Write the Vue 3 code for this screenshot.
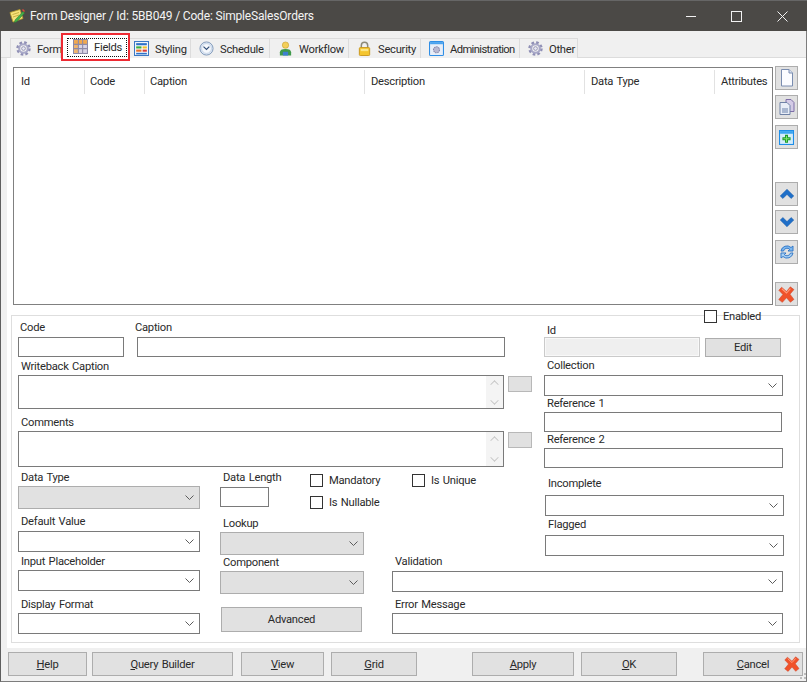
<script setup>
const tabs = [
  { name: 'Form', icon: 'gear', width: 51, pad: 5 },
  { name: 'Fields', icon: 'grid', width: 65, pad: 10, active: true },
  { name: 'Styling', icon: 'palette', width: 61, pad: 4 },
  { name: 'Schedule', icon: 'clock', width: 79, pad: 8 },
  { name: 'Workflow', icon: 'person', width: 79, pad: 8 },
  { name: 'Security', icon: 'lock', width: 72, pad: 8 },
  { name: 'Administration', icon: 'window', width: 99, pad: 8, tight: true },
  { name: 'Other', icon: 'gear', width: 58, pad: 8 }
]
const columns = [
  { name: 'Id', width: 71, pad: 7 },
  { name: 'Code', width: 60, pad: 5 },
  { name: 'Caption', width: 220, pad: 5 },
  { name: 'Description', width: 220, pad: 6 },
  { name: 'Data Type', width: 130, pad: 6 },
  { name: 'Attributes', width: 55, pad: 6 }
]
</script>

<template>
  <div class="screen">
    <svg class="defs" width="0" height="0" aria-hidden="true">
      <defs>
        <symbol id="gear" viewBox="0 0 16 16">
          <circle cx="8" cy="8" r="6" fill="none" stroke="#8f8fb5" stroke-width="3.4" stroke-dasharray="2.6 2.1" />
          <circle cx="8" cy="8" r="4.6" fill="none" stroke="#a9a9c8" stroke-width="2.2" />
          <circle cx="8" cy="8" r="2" fill="#e8e8f2" stroke="#8484a8" stroke-width=".8" />
        </symbol>
        <symbol id="grid" viewBox="0 0 14 14">
          <rect x=".5" y=".5" width="13" height="13" fill="#d8d4e6" stroke="#8d8aa8" />
          <rect x="1" y="1" width="12" height="4" fill="#f2a84c" />
          <rect x="1" y="5" width="4" height="8" fill="#f2b56a" />
          <path d="M5 1v12M9 1v12M1 5h12M1 9h12" stroke="#8d8aa8" stroke-width="1" />
        </symbol>
        <symbol id="palette" viewBox="0 0 14 14">
          <rect x=".5" y=".5" width="13" height="13" fill="#fff" stroke="#3b78c4" />
          <rect x="2" y="2" width="10" height="2" fill="#2f72c8" />
          <rect x="2" y="5" width="5" height="2" fill="#3fae3f" />
          <rect x="8" y="5" width="4" height="2" fill="#f2c12e" />
          <rect x="2" y="8" width="5" height="2" fill="#e8702a" />
          <rect x="8" y="8" width="4" height="2" fill="#d83a3a" />
          <rect x="2" y="11" width="10" height="1.5" fill="#2f72c8" />
        </symbol>
        <symbol id="clock" viewBox="0 0 16 16">
          <circle cx="8" cy="8" r="7" fill="#dfe9f6" stroke="#7f97b8" />
          <circle cx="8" cy="8" r="5.2" fill="#f6f9fd" stroke="#b5c7dd" stroke-width=".7" />
          <path d="M4.8 6 8 9l3-3" fill="none" stroke="#33507a" stroke-width="1.3" />
        </symbol>
        <symbol id="person" viewBox="0 0 14 16">
          <circle cx="7" cy="4.4" r="3.4" fill="#f3cf5a" stroke="#c49a2a" stroke-width=".6" />
          <path d="M1 15.5V12c0-2.4 2-3.6 6-3.6s6 1.2 6 3.6v3.5z" fill="#3f9a4a" />
          <path d="M4.2 15.5v-4h5.6v4z" fill="#3d7fd0" />
        </symbol>
        <symbol id="lock" viewBox="0 0 14 16">
          <path d="M3.6 8V4.8a3.4 3.4 0 0 1 6.8 0V8" fill="none" stroke="#8d8a78" stroke-width="1.6" />
          <rect x="1.5" y="7" width="11" height="8.5" rx="1" fill="#f4c52e" stroke="#c8951a" />
          <rect x="3" y="8.4" width="8" height="2.4" fill="#fbe588" />
        </symbol>
        <symbol id="window" viewBox="0 0 14 14">
          <rect x=".5" y=".5" width="13" height="13" rx="1" fill="#e8eef8" stroke="#2f8ee6" />
          <rect x="1" y="1" width="12" height="2" fill="#4aa3ee" />
          <circle cx="7" cy="8.2" r="2.8" fill="#b9b9d2" stroke="#8484a8" stroke-width="1" stroke-dasharray="1.4 .7" />
        </symbol>
        <symbol id="redx" viewBox="0 0 16 16">
          <path d="M3.4 1.2 8 5.2l3.6-4.4 3.4 2.6-3.7 4.3 3.7 4.9-3.3 2.700L8 11l-3.900 4.400-3.400-2.600 3.900-4.800L.8 4z" fill="#f0522a" stroke="#d0452a" stroke-width=".5" stroke-linejoin="round" />
          <path d="M3.600 2.600 8 6.600l3.700-4.200" fill="none" stroke="#ff9a78" stroke-width="1" />
        </symbol>
        <symbol id="chev" viewBox="0 0 9 5">
          <path d="M.5.5l4 4 4-4" fill="none" stroke="#5c5c5c" stroke-width="1" />
        </symbol>
      </defs>
    </svg>

    <div class="window">
      <header class="titlebar">
        <svg class="title-icon" viewBox="0 0 16 16" width="16" height="16">
          <path d="M1 4.500 11 1.500l3 9-10 3.500z" fill="#f7e27a" stroke="#b59a2a" stroke-width=".8" />
          <path d="M3.500 6.500 10 4.500M4 9l6-2" stroke="#b59a2a" stroke-width=".7" />
          <path d="M6 12 14 3.500l1.500 1.500L8 13.500l-2.500 1z" fill="#46b04a" stroke="#2c7c30" stroke-width=".5" />
          <path d="M13 2l2 2 1-1-2-2z" fill="#e0483a" />
        </svg>
        <span class="title-text">Form Designer / Id: 5BB049 / Code: SimpleSalesOrders</span>
        <div class="win-controls">
          <svg class="win-min" width="10" height="10" viewBox="0 0 10 10"><path d="M0 5.500h10" stroke="#f2f2f2" /></svg>
          <svg class="win-max" width="11" height="11" viewBox="0 0 11 11"><rect x=".5" y=".5" width="10" height="10" fill="none" stroke="#f2f2f2" /></svg>
          <svg class="win-close" width="11" height="11" viewBox="0 0 11 11"><path d="M.5.500l10 10M10.500.500l-10 10" stroke="#f2f2f2" /></svg>
        </div>
      </header>

      <nav class="tabstrip">
        <div
          v-for="tab in tabs"
          :key="tab.name"
          class="tab"
          :class="{ active: tab.active, tight: tab.tight }"
          :style="{ width: tab.width + 'px', paddingLeft: tab.pad + 'px' }"
        >
          <svg class="tab-icon"><use :href="'#' + tab.icon" /></svg>
          <span class="tab-text">{{ tab.name }}</span>
          <i v-if="tab.active" class="focus-ring"></i>
          <i v-if="tab.active" class="highlight"></i>
        </div>
      </nav>

      <main class="content">
        <section class="list-row">
          <div class="list">
            <div class="list-head">
              <div v-for="col in columns" :key="col.name" class="col-head" :style="{ width: col.width + 'px', paddingLeft: col.pad + 'px' }">{{ col.name }}</div>
            </div>
          </div>
          <div class="toolbar">
            <button class="tool">
              <svg width="16" height="18" viewBox="0 0 16 18"><path d="M2.500.500h7.500l3.500 3.500v13h-11z" fill="#fbfcff" stroke="#7a8db0" /><path d="M10 .5v3.500h3.500" fill="#dbe3f2" stroke="#7a8db0" /></svg>
            </button>
            <button class="tool t2">
              <svg width="16" height="16" viewBox="0 0 16 16"><path d="M7 .5h5l3 3v9H7z" fill="#d4cbe6" stroke="#7f6fa8" /><path d="M1 3.500h7l3 3v9H1z" fill="#e8edf6" stroke="#6f82a6" /><rect x="3" y="9" width="6" height="5" fill="#a9b7d0" /></svg>
            </button>
            <button class="tool t3">
              <svg width="15" height="15" viewBox="0 0 14 14"><rect x=".5" y=".5" width="13" height="13" fill="#d4ecfb" stroke="#1e8ee8" /><rect x="1" y="1" width="12" height="2.500" fill="#3aa4f0" /><path d="M7 4.500v7.500M3.200 8.200h7.600" stroke="#1c9a2a" stroke-width="2.800" /><path d="M7 5.500v5.500M4.200 8.200h5.600" stroke="#7de36a" stroke-width="1" /></svg>
            </button>
            <button class="tool t4">
              <svg width="16" height="12" viewBox="0 0 16 12"><path d="M8 1.200 14.800 8l-2.700 2.500L8 6.400l-4.100 4.100L1.200 8z" fill="#1f6fc8" stroke="#1a5aa6" stroke-width=".5" /></svg>
            </button>
            <button class="tool t5">
              <svg width="16" height="12" viewBox="0 0 16 12"><path d="M8 10.800 14.800 4l-2.700-2.500L8 5.600 3.900 1.500 1.200 4z" fill="#1f6fc8" stroke="#1a5aa6" stroke-width=".5" /></svg>
            </button>
            <button class="tool t6">
              <svg width="18" height="18" viewBox="0 0 18 18"><path d="M3 8a6 6 0 0 1 10-3.500L15 3v5h-5l1.700-1.700A3.700 3.700 0 0 0 5.500 8z" fill="#7cb8f0" stroke="#2a72c4" stroke-width=".9" /><path d="M15 10a6 6 0 0 1-10 3.500L3 15v-5h5l-1.700 1.700A3.700 3.700 0 0 0 12.500 10z" fill="#a9d2f6" stroke="#2a72c4" stroke-width=".9" /></svg>
            </button>
            <button class="tool t7">
              <svg width="17" height="17"><use href="#redx" /></svg>
            </button>
          </div>
        </section>

        <section class="panel">
          <label class="enabled"><i class="check"></i><span>Enabled</span></label>

          <div class="upper">
            <div class="upper-left">
              <div class="row-code">
                <div class="code-col">
                  <span class="lbl">Code</span>
                  <div class="input code-input"></div>
                </div>
                <div class="caption-col">
                  <span class="lbl">Caption</span>
                  <div class="input caption-input"></div>
                </div>
              </div>
              <span class="lbl wb-lbl">Writeback Caption</span>
              <div class="memo-row">
                <div class="memo wb-memo"><div class="spin"><b class="up"></b><b class="down"></b></div></div>
                <div class="mini"></div>
              </div>
              <span class="lbl comments-lbl">Comments</span>
              <div class="memo-row">
                <div class="memo comments-memo"><div class="spin"><b class="up"></b><b class="down"></b></div></div>
                <div class="mini"></div>
              </div>
            </div>

            <div class="upper-right">
              <span class="lbl id-lbl">Id</span>
              <div class="id-row">
                <div class="id-input"></div>
                <button class="btn edit">Edit</button>
              </div>
              <span class="lbl coll-lbl">Collection</span>
              <div class="input combo coll-combo"><svg class="chev"><use href="#chev" /></svg></div>
              <span class="lbl ref-lbl">Reference 1</span>
              <div class="input ref1"></div>
              <span class="lbl ref-lbl">Reference 2</span>
              <div class="input ref2"></div>
            </div>
          </div>

          <div class="lower">
            <div class="col-a">
              <span class="lbl a1">Data Type</span>
              <div class="input combo off a-dt"><svg class="chev"><use href="#chev" /></svg></div>
              <span class="lbl a2">Default Value</span>
              <div class="input combo a-c a-c2"><svg class="chev"><use href="#chev" /></svg></div>
              <span class="lbl a3">Input Placeholder</span>
              <div class="input combo a-c"><svg class="chev"><use href="#chev" /></svg></div>
              <span class="lbl a4">Display Format</span>
              <div class="input combo a-c"><svg class="chev"><use href="#chev" /></svg></div>
            </div>

            <div class="col-b">
              <div class="b-top">
                <div class="dl-col">
                  <span class="lbl b1">Data Length</span>
                  <div class="input dl-input"></div>
                </div>
                <div class="checks">
                  <label class="chk"><i class="check"></i><span>Mandatory</span></label>
                  <label class="chk"><i class="check"></i><span>Is Nullable</span></label>
                </div>
              </div>
              <span class="lbl b2">Lookup</span>
              <div class="input combo off b-c"><svg class="chev"><use href="#chev" /></svg></div>
              <span class="lbl b3">Component</span>
              <div class="input combo off b-c"><svg class="chev"><use href="#chev" /></svg></div>
              <button class="btn advanced">Advanced</button>
            </div>

            <div class="col-c">
              <div class="c-top">
                <label class="chk unique"><i class="check"></i><span>Is Unique</span></label>
                <div class="flags">
                  <span class="lbl c1">Incomplete</span>
                  <div class="input combo flag-1"><svg class="chev"><use href="#chev" /></svg></div>
                  <span class="lbl c2">Flagged</span>
                  <div class="input combo flag-2"><svg class="chev"><use href="#chev" /></svg></div>
                </div>
              </div>
              <span class="lbl c3">Validation</span>
              <div class="input combo wide w-1"><svg class="chev"><use href="#chev" /></svg></div>
              <span class="lbl c4">Error Message</span>
              <div class="input combo wide"><svg class="chev"><use href="#chev" /></svg></div>
            </div>
          </div>
        </section>
      </main>

      <footer class="footer">
        <button class="btn f-help"><u>H</u>elp</button>
        <button class="btn f-query"><u>Q</u>uery Builder</button>
        <button class="btn f-view"><u>V</u>iew</button>
        <button class="btn f-grid"><u>G</u>rid</button>
        <button class="btn f-apply"><u>A</u>pply</button>
        <button class="btn f-ok"><u>O</u>K</button>
        <button class="btn f-cancel"><u>C</u>ancel<svg class="x-icon" width="16" height="16"><use href="#redx" /></svg></button>
        <svg class="grip" width="10" height="10" viewBox="0 0 10 10"><path d="M8 2h2v2H8zM4 6h2v2H4zM8 6h2v2H8z" fill="#bdbdbd" /></svg>
      </footer>
    </div>
  </div>
</template>

<style>
html, body { margin: 0; background: #fff; }
</style>

<style scoped>
.screen { width: 808px; height: 683px; overflow: hidden; background: #fff; font-family: Roboto, "Liberation Sans", sans-serif; font-size: 11.2px; letter-spacing: -.25px; word-spacing: 1px; color: #2a2a2a; }
.defs { position: absolute; }
.window { width: 807px; height: 682px; box-sizing: border-box; border-left: 1px solid #5f5f5f; border-right: 1px solid #7d7d7d; border-bottom: 1px solid #7d7d7d; background: #f0f0f0; display: flex; flex-direction: column; }
.titlebar { height: 31px; flex: none; background: #4b4946; border-top: 1px solid #666; box-sizing: border-box; margin-left: -1px; margin-right: -1px; display: flex; align-items: center; padding-left: 9px; position: relative; }
.title-icon { flex: none; }
.title-text { margin-left: 5px; color: #f4f4f4; font-size: 12px; letter-spacing: -.17px; word-spacing: 0; line-height: 30px; white-space: nowrap; }
.win-controls { margin-left: auto; display: flex; align-items: center; }
.win-min { margin-right: 35px; }
.win-max { margin-right: 35px; }
.win-close { margin-right: 19px; }

.tabstrip { height: 27px; flex: none; box-sizing: border-box; padding: 7px 0 0 9px; display: flex; border-bottom: 1px solid #dcdcdc; }
.tab { height: 20px; box-sizing: border-box; border: 1px solid #dcdcdc; border-bottom: 0; border-left-width: 0; display: flex; align-items: center; gap: 6px; position: relative; white-space: nowrap; background: #f0f0f0; flex: none; overflow: visible; }
.tab:first-child { border-left-width: 1px; }
.tab.tight { letter-spacing: -.6px; }
.tab-text { padding-top: 2px; line-height: 13px; }
.tab-icon { width: 15px; height: 15px; flex: none; }
.tab.active { background: #fff; height: 23px; margin: -3px 2px -1px 2px; z-index: 1; border: 0; }
.focus-ring { position: absolute; left: 4px; right: 1px; top: 3px; bottom: 1px; border: 1px dotted #111; }
.highlight { position: absolute; left: -2px; right: -2px; top: -2px; bottom: -3px; border: 2px solid #ee2a33; }

.content { flex: none; height: 590px; box-sizing: border-box; margin-left: 6px; background: #fff; padding: 0 0 0 4px; }
.list-row { display: flex; padding: 8px 0 0 2px; }
.list { width: 760px; height: 238px; box-sizing: border-box; border: 1px solid #808080; margin-top: 1px; }
.list-head { display: flex; padding-top: 2px; }
.col-head { height: 24px; line-height: 24px; box-sizing: border-box; border-right: 1px solid #e2e2e2; white-space: nowrap; }
.col-head:last-child { border-right: 0; }
.toolbar { display: flex; flex-direction: column; margin-left: 2px; }
.tool { width: 23px; height: 24px; padding: 0; box-sizing: border-box; background: #e1e1e1; border: 1px solid #adadad; display: flex; align-items: center; justify-content: center; }
.t2 { margin-top: 5px; }
.t3 { margin-top: 6px; }
.t4 { margin-top: 33px; }
.t5 { margin-top: 4px; }
.t6 { margin-top: 6px; }
.t7 { margin-top: 18px; }

.panel { position: relative; width: 789px; height: 328px; margin: 9px 0 0 0; box-sizing: border-box; border: 1px solid #dedede; padding: 5px 0 0 6px; }
.enabled { position: absolute; left: 692px; top: -6px; display: flex; align-items: center; gap: 6px; line-height: 13px; }
.check { display: block; box-sizing: content-box; border: 1px solid #333; background: #fff; flex: none; width: 11px; height: 11px; }

.lbl { display: block; height: 13px; line-height: 13px; padding-left: 2px; white-space: nowrap; }
.input { box-sizing: border-box; height: 21px; border: 1px solid #7a7a7a; background: #fff; position: relative; }
.combo .chev { position: absolute; right: 5px; top: 50%; margin-top: -3px; width: 9px; height: 5px; }
.combo.off { background: #e1e1e1; border-color: #adadad; }

.upper { display: flex; height: 147px; }
.upper-left { width: 526px; flex: none; }
.row-code { display: flex; }
.code-col { width: 117px; }
.code-col .lbl { margin-bottom: 3px; }
.code-input { width: 106px; height: 20px; }
.caption-col { margin-left: 2px; }
.caption-col .lbl { margin-left: -2px; padding-left: 0; margin-bottom: 3px; }
.caption-input { width: 368px; height: 20px; }
.wb-lbl { margin-top: 3px; padding-left: 3px; }
.comments-lbl { margin-top: 7px; padding-left: 3px; }
.memo-row { display: flex; margin-top: 2px; }
.memo { box-sizing: border-box; width: 486px; border: 1px solid #7a7a7a; background: #fff; display: flex; justify-content: flex-end; }
.wb-memo { height: 34px; }
.comments-memo { height: 36px; }
.spin { width: 17px; display: flex; flex-direction: column; justify-content: space-around; align-items: center; background: #f4f4f4; }
.spin b { display: block; width: 7px; height: 7px; border-left: 1px solid #c4c4c4; border-top: 1px solid #c4c4c4; transform: rotate(45deg) scale(.85); box-sizing: border-box; }
.spin b.down { transform: rotate(225deg) scale(.85); }
.mini { width: 24px; height: 16px; margin: 1px 0 0 4px; box-sizing: border-box; border: 1px solid #b8b8b8; background: #e1e1e1; }

.upper-right { width: 240px; flex: none; }
.id-lbl { margin-top: 3px; padding-left: 3px; }
.id-row { display: flex; align-items: flex-start; }
.id-input { width: 156px; height: 20px; box-sizing: border-box; border: 1px solid #cacaca; background: #efefef; box-shadow: inset 0 0 0 1px #f8f8f8; }
.edit { width: 76px; height: 19px; margin: 1px 0 0 5px; }
.coll-lbl { margin-top: 2px; padding-left: 3px; }
.coll-combo { width: 239px; margin-top: 3px; }
.ref-lbl { padding-left: 3px; margin-top: 1px; }
.ref1 { width: 238px; margin-top: 2px; height: 20px; }
.ref2 { width: 239px; margin-top: 2px; height: 20px; }

.lower { display: flex; }
.col-a { width: 202px; flex: none; }
.a1 { margin-top: 3px; padding-left: 3px; }
.a-dt { width: 182px; height: 23px; margin-top: 2px; }
.a-c { width: 182px; margin-top: 2px; }
.a-c2 { margin-top: 3px; }
.a2 { margin-top: 6px; padding-left: 3px; }
.a3 { margin-top: 3px; padding-left: 3px; }
.a4 { margin-top: 7px; padding-left: 3px; }

.col-b { width: 172px; flex: none; }
.b-top { display: flex; height: 46px; }
.dl-col { width: 90px; flex: none; }
.b1 { margin-top: 3px; padding-left: 3px; }
.dl-input { width: 49px; height: 20px; margin-top: 3px; }
.checks { display: flex; flex-direction: column; gap: 9px; padding-top: 6px; }
.chk { display: flex; align-items: center; gap: 6px; height: 13px; line-height: 13px; white-space: nowrap; }
.b2 { margin-top: 3px; padding-left: 3px; }
.b-c { width: 144px; height: 23px; margin-top: 2px; }
.b3 { margin-top: 1px; padding-left: 3px; }
.advanced { width: 141px; height: 25px; margin: 13px 0 0 1px; display: block; padding-top: 1px; }

.col-c { width: 392px; flex: none; }
.c-top { height: 87px; display: flex; }
.unique { margin: 6px 0 0 20px; width: 133px; flex: none; }
.flags { flex: none; }
.c1 { margin-top: 9px; padding-left: 3px; }
.flag-1 { width: 239px; margin-top: 5px; }
.flag-2 { width: 239px; margin-top: 4px; }
.c2 { margin-top: 2px; padding-left: 3px; }
.c3 { padding-left: 3px; }
.c4 { padding-left: 3px; margin-top: 6px; }
.wide { width: 391px; margin-top: 2px; }
.w-1 { margin-top: 3px; }

.btn { box-sizing: border-box; background: #e1e1e1; border: 1px solid #adadad; color: #2a2a2a; font: inherit; letter-spacing: inherit; word-spacing: inherit; text-align: center; }

.footer { flex: none; height: 33px; box-sizing: border-box; padding: 4px 0 0 7px; display: flex; position: relative; align-items: flex-start; }
.footer .btn { height: 24px; position: relative; padding: 0; }
.f-help { width: 79px; }
.f-query { width: 141px; margin-left: 5px; }
.f-view { width: 83px; margin-left: 8px; }
.f-grid { width: 86px; margin-left: 7px; }
.f-apply { width: 102px; margin-left: 55px; }
.f-ok { width: 96px; margin-left: 7px; }
.f-cancel { width: 100px; margin-left: 26px; }
.x-icon { position: absolute; right: 2px; top: 3px; }
.grip { position: absolute; right: 0; bottom: 0; }
</style>
